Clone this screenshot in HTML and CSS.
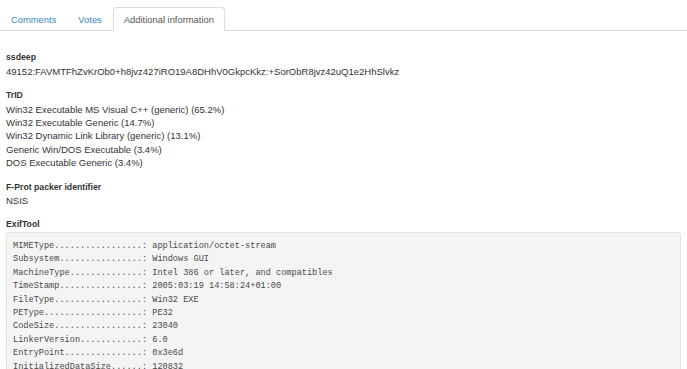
FILE: index.html
```html
<!DOCTYPE html>
<html lang="en">
<head>
    <meta charset="UTF-8">
    <title>Additional information</title>
    <link rel="stylesheet" href="styles.css">
</head>
<body>
    <ul class="tabs">
        <li><a href="#">Comments</a></li>
        <li><a href="#">Votes</a></li>
        <li class="active"><a href="#">Additional information</a></li>
    </ul>

    <div class="tab-content">
        <div class="section">
            <h5>ssdeep</h5>
            <div>49152:FAVMTFhZvKrOb0+h8jvz427iRO19A8DHhV0GkpcKkz:+SorObR8jvz42uQ1e2HhSlvkz</div>
        </div>

        <div class="section">
            <h5>TrID</h5>
            <div>Win32 Executable MS Visual C++ (generic) (65.2%)</div>
            <div>Win32 Executable Generic (14.7%)</div>
            <div>Win32 Dynamic Link Library (generic) (13.1%)</div>
            <div>Generic Win/DOS Executable (3.4%)</div>
            <div>DOS Executable Generic (3.4%)</div>
        </div>

        <div class="section">
            <h5>F-Prot packer identifier</h5>
            <div>NSIS</div>
        </div>

        <div class="section">
            <h5>ExifTool</h5>
<pre>MIMEType.................: application/octet-stream
Subsystem................: Windows GUI
MachineType..............: Intel 386 or later, and compatibles
TimeStamp................: 2005:03:19 14:58:24+01:00
FileType.................: Win32 EXE
PEType...................: PE32
CodeSize.................: 23040
LinkerVersion............: 6.0
EntryPoint...............: 0x3e6d
InitializedDataSize......: 120832</pre>
        </div>
    </div>
</body>
</html>
```

FILE: styles.css
```css
/* General */
body {
    margin: 0;
    padding: 0;
    font-family: 'Liberation Sans', Arial, sans-serif;
    font-size: 9.5px;
    line-height: 13.4px;
    color: #333;
    background: #fff;
    overflow: hidden;
}

/* Tabs */
.tabs {
    list-style: none;
    margin: 0;
    padding: 7px 0 0;
    display: flex;
    border-bottom: 1px solid #ddd;
    font-size: 9.4px;
}

.tabs li {
    margin: 0 0 -1px 0;
}

.tabs a {
    display: block;
    padding: 4.5px 10px;
    line-height: 13.4px;
    color: #3a87c8;
    text-decoration: none;
    border: 1px solid transparent;
    border-radius: 4px 4px 0 0;
}

.tabs .active a {
    color: #555;
    background: #fff;
    border-color: #ddd #ddd transparent;
}

/* Content */
.tab-content {
    padding: 20px 6px 0;
}

.section {
    margin-bottom: 11px;
}

.section h5 {
    margin: 0;
    font-size: 8.7px;
    font-weight: bold;
    line-height: 13.4px;
}

pre {
    margin: 0;
    padding: 7px 6px 6px;
    font-family: 'Liberation Mono', 'Courier New', monospace;
    font-size: 8.6px;
    line-height: 13.4px;
    color: #4a4a4a;
    background: #f4f4f4;
    border: 1px solid #e3e3e3;
    border-radius: 3px;
}
```
